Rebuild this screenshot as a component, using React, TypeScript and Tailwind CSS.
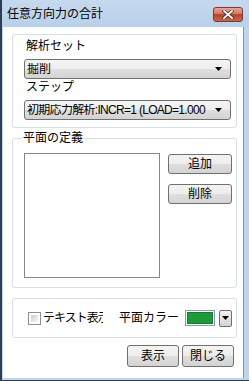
import React from 'react'

const font = "font-['Liberation_Sans','Noto_Sans_CJK_JP',sans-serif] text-[12px] leading-[13px] text-black"

const Arrow = () => (
  <svg width="7" height="4" viewBox="0 0 7 4" className="shrink-0">
    <path d="M0 0h7L3.5 4z" fill="#000" />
  </svg>
)

function Combo({ text, tight }: { text: string; tight?: boolean }) {
  return (
    <div className="flex items-center w-[207px] h-[20px] rounded-[3px] border border-[#707070] bg-[linear-gradient(#f4f4f4_0%,#ededed_50%,#dfdfdf_50%,#d3d3d3_100%)] pl-[2px] pr-[8px]">
      <span className={`flex-1 overflow-hidden whitespace-nowrap ${tight ? 'tracking-[-0.7px]' : ''}`}>{text}</span>
      <Arrow />
    </div>
  )
}

function Btn({ label, w, h }: { label: string; w: string; h: string }) {
  return (
    <button className={`${w} ${h} flex items-center justify-center rounded-[3px] border border-[#707070] bg-[linear-gradient(#f4f4f4_0%,#ededed_50%,#dfdfdf_50%,#d3d3d3_100%)]`}>
      {label}
    </button>
  )
}

export default function App() {
  return (
    <div className={`${font} w-[249px] h-[381px] flex flex-col bg-[#c0d5eb] border-l-2 border-b border-[#2c3e57]`}>
      {/* title bar */}
      <div className="h-[27px] flex bg-[linear-gradient(#c6d9ee,#b9d0e9)] rounded-tr-[6px]">
        <span className="self-center pl-[5px] pt-[1px]">任意方向力の合計</span>
        <div className="ml-auto mr-[6px] mt-[7px] w-[30px] h-[15px] rounded-[3px] border border-[#7a3a30] bg-[linear-gradient(#e8a898,#d0705c_50%,#b8432e_50%,#c9654a)] flex items-center justify-center">
          <svg width="12" height="9" viewBox="0 0 12 9">
            <path d="M2 1l8 7M10 1L2 8" stroke="#3a2a2a" strokeWidth="3.2" strokeLinecap="square" />
            <path d="M2 1l8 7M10 1L2 8" stroke="#fff" strokeWidth="1.8" strokeLinecap="square" />
          </svg>
        </div>
      </div>

      <div className="flex h-[351px]">
        <div className="w-[1px]" />
        {/* client area */}
        <div className="w-[240px] bg-white flex flex-col px-[9px] pt-[7px]">
          {/* 解析セット */}
          <div className="h-[94px] w-[225px] rounded-[3px] border border-[#d5dfe5] flex flex-col pl-[11px] pt-[5px]">
            <span className="pl-[2px]">解析セット</span>
            <div className="mt-[6px]">
              <Combo text="掘削" />
            </div>
            <span className="mt-[2px] pl-[2px]">ステップ</span>
            <div className="mt-[6px]">
              <Combo text="初期応力解析:INCR=1 (LOAD=1.000" tight />
            </div>
          </div>

          {/* 平面の定義 */}
          <div className="relative mt-[10px] h-[150px] w-[225px] rounded-[3px] border border-[#d5dfe5] flex pl-[11px] pt-[14px]">
            <span className="absolute left-[9px] -top-[7px] bg-white px-[1px]">平面の定義</span>
            <div className="w-[136px] h-[125px] border border-[#828790] bg-white" />
            <div className="ml-[8px] mt-[1px] flex flex-col gap-[10px]">
              <Btn label="追加" w="w-[64px]" h="h-[20px]" />
              <Btn label="削除" w="w-[64px]" h="h-[20px]" />
            </div>
          </div>

          {/* オプション */}
          <div className="mt-[10px] h-[40px] w-[225px] rounded-[3px] border border-[#d5dfe5] flex items-center pl-[15px]">
            <div className="w-[13px] h-[13px] border border-[#8e8f8f] bg-white p-[2px]">
              <div className="w-full h-full bg-[linear-gradient(135deg,#cbcfd5,#f6f6f6)]" />
            </div>
            <span className="ml-[2px] w-[60px] overflow-hidden whitespace-nowrap tracking-[-1px]">テキスト表示</span>
            <span className="ml-[16px]">平面カラー</span>
            <div className="ml-auto mr-[4px] flex items-center">
              <div className="w-[30px] h-[16px] border border-[#7f9db9] p-[1px] bg-white">
                <div className="w-full h-full bg-[#1e9a38] border border-[#167a2a]" />
              </div>
              <div className="ml-[4px] w-[13px] h-[17px] border border-[#707070] rounded-[2px] bg-[linear-gradient(#f2f2f2,#d4d4d4)] flex items-center justify-center">
                <Arrow />
              </div>
            </div>
          </div>

          {/* buttons */}
          <div className="mt-[7px] flex justify-end gap-[3px]">
            <Btn label="表示" w="w-[52px]" h="h-[22px]" />
            <Btn label="閉じる" w="w-[52px]" h="h-[22px]" />
          </div>
        </div>
        <div className="w-[1px] bg-[#7f97b3]" />
        <div className="w-[5px]" />
      </div>
    </div>
  )
}
